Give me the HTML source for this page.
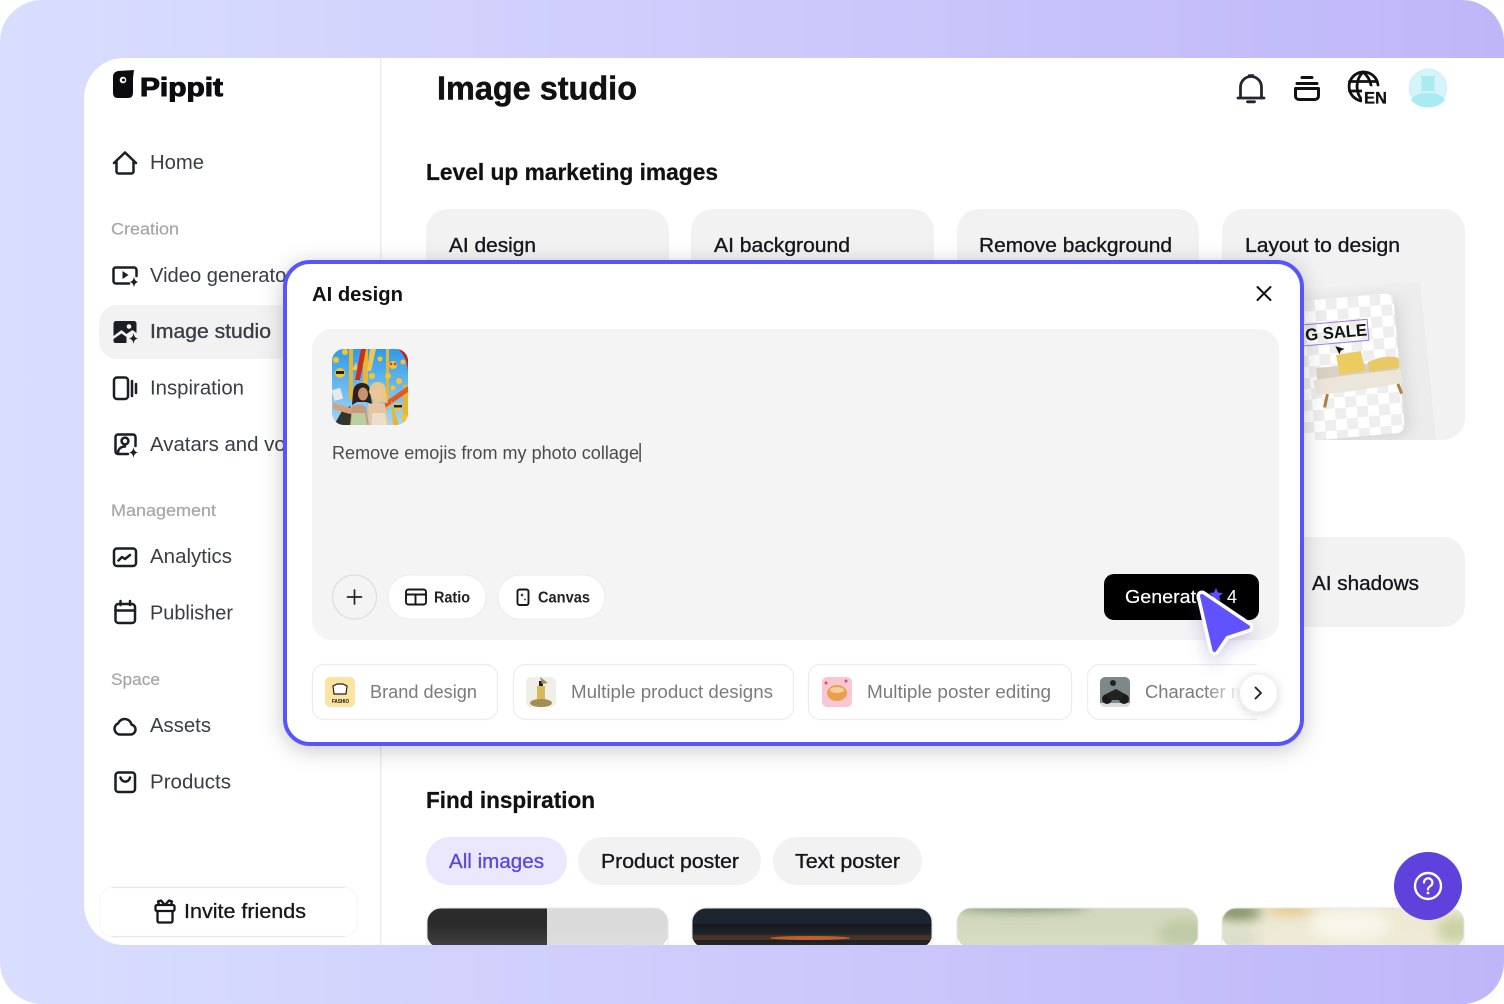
<!DOCTYPE html>
<html lang="en"><head><meta charset="utf-8"><title>Image studio</title>
<style>html,body{margin:0;padding:0;background:#fff;width:1504px;height:1004px;overflow:hidden}svg{display:block}text{font-family:"Liberation Sans",sans-serif}</style></head>
<body>
<svg xmlns="http://www.w3.org/2000/svg" width="1504" height="1004" viewBox="0 0 1504 1004">
<defs>
<linearGradient id="bg" x1="0" x2="1" y1="0" y2="0"><stop offset="0" stop-color="#d9deff"/><stop offset=".5" stop-color="#cdcafb"/><stop offset="1" stop-color="#bfb6f9"/></linearGradient>
<linearGradient id="fade" x1="0" x2="1"><stop offset="0" stop-color="#fff" stop-opacity="0"/><stop offset="1" stop-color="#fff"/></linearGradient>
<linearGradient id="bot" x1="0" x2="0" y1="0" y2="1"><stop offset="0" stop-color="#fff" stop-opacity="0"/><stop offset="1" stop-color="#f6f6f6" stop-opacity=".1"/></linearGradient>
<linearGradient id="sky" x1="0" x2="0" y1="0" y2="1"><stop offset="0" stop-color="#2f9be8"/><stop offset="1" stop-color="#a5d8f5"/></linearGradient>
<linearGradient id="pan" x1="0" x2="1"><stop offset="0" stop-color="#f1f1f1"/><stop offset=".7" stop-color="#efefef"/><stop offset="1" stop-color="#ebebeb"/></linearGradient>
<clipPath id="main"><path d="M124 58H1504V945H124a40 40 0 0 1-40-40V98a40 40 0 0 1 40-40z"/></clipPath>
<clipPath id="th"><rect x="332" y="349" width="76" height="76" rx="12"/></clipPath>
<clipPath id="c1"><rect x="427" y="908" width="241" height="40" rx="14"/></clipPath>
<clipPath id="c2"><rect x="692" y="908" width="240" height="40" rx="14"/></clipPath>
<clipPath id="c3"><rect x="957" y="908" width="241" height="40" rx="14"/></clipPath>
<clipPath id="c4"><rect x="1222" y="908" width="242" height="40" rx="14"/></clipPath>
<clipPath id="l4"><rect x="1222" y="209" width="243" height="231" rx="22"/></clipPath>
<clipPath id="chip4"><rect x="1087" y="664" width="170" height="56"/></clipPath>
<clipPath id="txt4"><rect x="1140" y="670" width="100" height="44"/></clipPath>
<clipPath id="t1"><rect x="325" y="677" width="30" height="30" rx="5"/></clipPath>
<clipPath id="t2"><rect x="526" y="677" width="30" height="30" rx="5"/></clipPath>
<clipPath id="t3"><rect x="822" y="677" width="30" height="30" rx="5"/></clipPath>
<clipPath id="t4"><rect x="1100" y="677" width="30" height="30" rx="5"/></clipPath>
<pattern id="chk" width="22" height="22" patternUnits="userSpaceOnUse"><rect width="22" height="22" fill="#fff"/><rect width="11" height="11" fill="#eeeeee"/><rect x="11" y="11" width="11" height="11" fill="#eeeeee"/></pattern>
<filter id="sh" x="-10%" y="-15%" width="120%" height="130%"><feDropShadow dx="0" dy="4" stdDeviation="11" flood-color="#000" flood-opacity=".22"/></filter>
<filter id="sh2" x="-50%" y="-50%" width="200%" height="200%"><feDropShadow dx="0" dy="6" stdDeviation="8" flood-color="#4030a0" flood-opacity=".25"/></filter>
<filter id="sh3" x="-30%" y="-30%" width="160%" height="160%"><feDropShadow dx="0" dy="2" stdDeviation="5" flood-color="#000" flood-opacity=".15"/></filter>
<filter id="sh4" x="-30%" y="-30%" width="160%" height="160%"><feDropShadow dx="4" dy="4" stdDeviation="8" flood-color="#000" flood-opacity=".12"/></filter>
<filter id="bl" x="-100%" y="-300%" width="300%" height="700%"><feGaussianBlur stdDeviation="6"/></filter>
</defs>

<rect width="1504" height="1004" rx="42" fill="url(#bg)"/>
<g clip-path="url(#main)">
<rect x="84" y="58" width="1420" height="887" fill="#fff"/>
<rect x="380" y="58" width="1.500" height="887" fill="#ececec"/>

<!-- logo -->
<path d="M113 77q0-5 5-6l16-1-1 8v15q0 5-5 5h-10q-5 0-5-5z" fill="#0c0c10"/>
<circle cx="123" cy="80" r="3.300" fill="#fff"/><circle cx="123.500" cy="80" r="1.500" fill="#0c0c10"/>
<text x="140" y="96" font-size="26" font-weight="700" fill="#0c0c10" stroke="#0c0c10" stroke-width="1" textLength="83" lengthAdjust="spacingAndGlyphs">Pippit</text>

<!-- sidebar -->
<rect x="99" y="305" width="210" height="54" rx="18" fill="#f2f2f2"/>
<g font-size="20.500" fill="#3a3d46">
<text x="150" y="169" textLength="54" lengthAdjust="spacingAndGlyphs">Home</text>
<text x="150" y="282" textLength="143" lengthAdjust="spacingAndGlyphs">Video generator</text>
<text x="150" y="338" textLength="121" lengthAdjust="spacingAndGlyphs" stroke="#3a3d46" stroke-width=".35">Image studio</text>
<text x="150" y="394.500" textLength="94" lengthAdjust="spacingAndGlyphs">Inspiration</text>
<text x="150" y="451" textLength="172" lengthAdjust="spacingAndGlyphs">Avatars and voices</text>
<text x="150" y="563" textLength="82" lengthAdjust="spacingAndGlyphs">Analytics</text>
<text x="150" y="619.500" textLength="83" lengthAdjust="spacingAndGlyphs">Publisher</text>
<text x="150" y="732" textLength="61" lengthAdjust="spacingAndGlyphs">Assets</text>
<text x="150" y="788.500" textLength="81" lengthAdjust="spacingAndGlyphs">Products</text>
</g>
<g font-size="16.500" fill="#a6a6a6" stroke="#a6a6a6" stroke-width=".2">
<text x="111" y="234.500" textLength="68" lengthAdjust="spacingAndGlyphs">Creation</text>
<text x="111" y="516" textLength="105" lengthAdjust="spacingAndGlyphs">Management</text>
<text x="111" y="685" textLength="49" lengthAdjust="spacingAndGlyphs">Space</text>
</g>
<!-- sidebar icons -->
<g fill="none" stroke="#1c1e26" stroke-width="2.500" stroke-linecap="round" stroke-linejoin="round">
<path d="M114 163L125 152.500L136 163M116.500 160.500V171.500a2 2 0 0 0 2 2H131.500a2 2 0 0 0 2-2V160.500"/>
<path d="M129 283.500H116a2.500 2.500 0 0 1-2.500-2.500V269.500a2 2 0 0 1 2-2H134a2.500 2.500 0 0 1 2.500 2.500V276"/>
<rect x="114" y="377.500" width="14" height="21.500" rx="3"/>
<path d="M132 381V396M136 384V393"/>
<path d="M128 454H118a2.500 2.500 0 0 1-2.500-2.500V437a2.500 2.500 0 0 1 2.500-2.500H133a2.500 2.500 0 0 1 2.500 2.500V446"/>
<circle cx="125" cy="441" r="3.400"/>
<path d="M118 453c0-4 3-6.500 7-6.500"/>
<rect x="114" y="548.500" width="22" height="17.500" rx="3"/>
<path d="M118.500 560.500l3.500-3.500 3 2 5-4"/>
<rect x="115.500" y="604" width="19.500" height="19" rx="3"/>
<path d="M115.500 610.500H135M120.500 601v4M130 601v4"/>
<path d="M120 734.500h10.500a5 5 0 0 0 1-9.900 7 7 0 0 0-13.300-1.300 5.800 5.800 0 0 0 1.800 11.200z"/>
<rect x="115.500" y="772.500" width="19.500" height="19.500" rx="3"/>
<path d="M120.500 777.500a4.800 4.800 0 0 0 9.500 0"/>
</g>
<g fill="#1c1e26">
<path d="M122.500 271v8l6-4z"/>
<path d="M134 276.500c.6 3.600 1.600 4.800 4.500 5.500-2.900.7-3.900 1.900-4.500 5.500-.6-3.600-1.600-4.800-4.500-5.500 2.900-.7 3.900-1.900 4.500-5.500z"/>
<path d="M116 321h18a2.500 2.500 0 0 1 2.500 2.500V333l-4-3-6 4-5-4-8 6V323.500a2.500 2.500 0 0 1 2.500-2.500zM113.500 339l8-5.500 5 3.500v6h-11a2 2 0 0 1-2-2z" fill-rule="evenodd"/>
<circle cx="129" cy="326.500" r="2.300" fill="#fff"/>
<path d="M133.500 333c.6 3.600 1.600 4.800 4.500 5.500-2.900.7-3.900 1.900-4.500 5.500-.6-3.600-1.600-4.800-4.500-5.500 2.900-.7 3.900-1.900 4.500-5.500z"/>
<path d="M133.500 447c.6 3.600 1.600 4.800 4.500 5.500-2.900.7-3.900 1.900-4.500 5.500-.6-3.600-1.600-4.800-4.500-5.500 2.900-.7 3.900-1.900 4.500-5.500z"/>
</g>

<!-- invite -->
<rect x="100" y="887" width="257" height="50" rx="13" fill="#fff" stroke="#f4f4f4" stroke-width="1"/>
<path d="M112 887.500H345M112 936.500H345" stroke="#e6e6e6" stroke-width="1.200"/>
<g fill="none" stroke="#16161c" stroke-width="2.300" stroke-linejoin="round" stroke-linecap="round">
<rect x="155.500" y="905" width="19" height="6" rx="1.500"/>
<path d="M157.500 911v10a1.500 1.500 0 0 0 1.500 1.500h12a1.500 1.500 0 0 0 1.500-1.500V911M165 905l-4-4.500-3 1 1 3.500M165 905l4-4.500 3 1-1 3.500"/>
</g>
<text x="184" y="918" font-size="20.500" fill="#16161c" stroke="#16161c" stroke-width=".3" textLength="122" lengthAdjust="spacingAndGlyphs">Invite friends</text>

<!-- header -->
<text x="437" y="99.500" font-size="33" font-weight="700" fill="#111" stroke="#111" stroke-width=".5" textLength="200" lengthAdjust="spacingAndGlyphs">Image studio</text>
<g fill="none" stroke="#24262d" stroke-width="2.800" stroke-linecap="round" stroke-linejoin="round">
<path d="M1238 98H1264M1240.500 97V87a10.500 10.500 0 0 1 21 0v10"/>
<path d="M1249 75.500h4" stroke-width="2.400"/>
<path d="M1247.500 101.800h7" stroke-width="2.800"/>
<path d="M1302 77.500h10M1297 83.500h20" stroke="#111" stroke-width="3"/>
<path d="M1295.500 88.500h23v7.500a3.500 3.500 0 0 1-3.500 3.500h-16a3.500 3.500 0 0 1-3.500-3.500z" stroke="#111" stroke-width="3"/>
<g stroke="#111" stroke-width="2.800"><path d="M1378 85a14.500 14.500 0 1 0-14 16"/><path d="M1349.500 81.500h27M1349.500 91h12M1363 72c-8 8-8 21 0 29M1363 72c5 4 7 8 8 13"/></g>
</g>
<rect x="1362" y="90" width="27" height="15" fill="#fff"/>
<text x="1364" y="103.500" font-size="16.500" font-weight="700" fill="#111" stroke="#111" stroke-width=".3" textLength="23" lengthAdjust="spacingAndGlyphs">EN</text>
<circle cx="1428" cy="88" r="19.500" fill="#d5f3f8"/>
<path d="M1421 76h14l-1 4 1 3-1 5 1 3h-14l1-3-1-4 1-4z" fill="#a9ebf3"/>
<path d="M1411 100c3-5 9-7 17-7s14 2 17 7c-4 4.500-10 7.500-17 7.500s-13-3-17-7.500z" fill="#a9ebf3"/>

<!-- marketing -->
<text x="426" y="180" font-size="23.500" font-weight="700" fill="#111" stroke="#111" stroke-width=".25" textLength="292" lengthAdjust="spacingAndGlyphs">Level up marketing images</text>
<g fill="#f2f2f2">
<rect x="426" y="209" width="243" height="231" rx="22"/>
<rect x="691" y="209" width="243" height="231" rx="22"/>
<rect x="957" y="209" width="242" height="231" rx="22"/>
<rect x="1222" y="209" width="243" height="231" rx="22"/>
<rect x="1222" y="537" width="243" height="90" rx="22"/>
</g>
<g font-size="20.500" fill="#16161c" stroke="#16161c" stroke-width=".35">
<text x="449" y="252" textLength="87" lengthAdjust="spacingAndGlyphs">AI design</text>
<text x="714" y="252" textLength="136" lengthAdjust="spacingAndGlyphs">AI background</text>
<text x="979" y="252" textLength="193" lengthAdjust="spacingAndGlyphs">Remove background</text>
<text x="1245" y="252" textLength="155" lengthAdjust="spacingAndGlyphs">Layout to design</text>
<text x="1312" y="590" textLength="107" lengthAdjust="spacingAndGlyphs">AI shadows</text>
</g>
<!-- layout card art -->
<g clip-path="url(#l4)">
<path d="M1290 290L1420 282L1436 440H1300z" fill="url(#pan)"/>
<g transform="rotate(-5 1350 365)">
<rect x="1290" y="297" width="109" height="140" rx="9" fill="url(#chk)" filter="url(#sh4)"/>
<rect x="1288" y="321" width="83" height="21" fill="none" stroke="#9b7ff0" stroke-width="1"/>
<text x="1308" y="337" font-size="17" font-weight="700" fill="#111" textLength="62" lengthAdjust="spacingAndGlyphs">G SALE</text>
<path d="M1337 345l9 3.500-4 1.500-1.500 3.500z" fill="#111"/>
<path d="M1316 365h82v12h-82z" fill="#d9d2c2"/>
<path d="M1312 377q44-3 88-3l2 13q-44 5-88 5z" fill="#ebe5da"/>
<path d="M1337 354l25-2 3 20-26 2z" fill="#eccb60"/>
<path d="M1368 364q16-7 31-2v10l-30 2z" fill="#e9c868"/>
<path d="M1325 392l-4 13M1396 388l3 10" stroke="#b08040" stroke-width="3"/>
</g>
</g>

<!-- find inspiration -->
<text x="426" y="808" font-size="23.500" font-weight="700" fill="#111" stroke="#111" stroke-width=".25" textLength="169" lengthAdjust="spacingAndGlyphs">Find inspiration</text>
<rect x="426" y="837" width="141" height="48" rx="24" fill="#ebe7fd"/>
<rect x="578" y="837" width="183" height="48" rx="24" fill="#f2f2f2"/>
<rect x="773" y="837" width="149" height="48" rx="24" fill="#f2f2f2"/>
<text x="449" y="868" font-size="20.500" fill="#5f46e0" stroke="#5f46e0" stroke-width=".35" textLength="95" lengthAdjust="spacingAndGlyphs">All images</text>
<text x="601" y="868" font-size="20.500" fill="#16161c" stroke="#16161c" stroke-width=".35" textLength="138" lengthAdjust="spacingAndGlyphs">Product poster</text>
<text x="795" y="868" font-size="20.500" fill="#16161c" stroke="#16161c" stroke-width=".35" textLength="105" lengthAdjust="spacingAndGlyphs">Text poster</text>

<g clip-path="url(#c1)"><rect x="427" y="908" width="120" height="40" fill="#2b2b2b"/><rect x="547" y="908" width="121" height="40" fill="#dadada"/></g>
<g clip-path="url(#c2)"><rect x="692" y="908" width="240" height="40" fill="#141a20"/><rect x="692" y="908" width="240" height="16" fill="#1c252d"/><rect x="692" y="935" width="240" height="5" fill="#3f2518"/><ellipse cx="810" cy="938" rx="40" ry="2" fill="#b8561f"/><rect x="692" y="940" width="240" height="8" fill="#0d0f11"/></g>
<g clip-path="url(#c3)"><rect x="957" y="908" width="241" height="40" fill="#d3d9bd"/><ellipse cx="1020" cy="904" rx="70" ry="6" fill="#6f8660" filter="url(#bl)"/><ellipse cx="1185" cy="935" rx="28" ry="14" fill="#bcc8a2" filter="url(#bl)"/></g>
<g clip-path="url(#c4)"><rect x="1222" y="908" width="242" height="40" fill="#ede9d4"/><ellipse cx="1238" cy="912" rx="24" ry="9" fill="#7f9364" filter="url(#bl)"/><ellipse cx="1290" cy="908" rx="24" ry="6" fill="#e6c37a" filter="url(#bl)"/><ellipse cx="1350" cy="925" rx="40" ry="16" fill="#f8f6ea" filter="url(#bl)"/><ellipse cx="1455" cy="930" rx="18" ry="14" fill="#c9d0a0" filter="url(#bl)"/><ellipse cx="1235" cy="940" rx="25" ry="12" fill="#d6dcc8" filter="url(#bl)"/></g>
<g fill="none" stroke="#e6e6e6" stroke-width="1"><rect x="427" y="908" width="241" height="60" rx="14"/><rect x="692" y="908" width="240" height="60" rx="14"/><rect x="957" y="908" width="241" height="60" rx="14"/><rect x="1222" y="908" width="242" height="60" rx="14"/></g>
<rect x="84" y="925" width="1420" height="20" fill="url(#bot)"/>
</g>

<!-- help -->
<circle cx="1428" cy="886" r="34" fill="#5f41dc"/>
<circle cx="1428" cy="886" r="13" fill="none" stroke="#fff" stroke-width="2.400"/>
<path d="M1424 882.500a4.200 4.200 0 1 1 6.500 3.500c-1.600 1-2.500 1.800-2.500 3.500" fill="none" stroke="#fff" stroke-width="2.200" stroke-linecap="round"/>
<circle cx="1428" cy="893" r="1.400" fill="#fff"/>

<!-- modal -->
<rect x="285" y="262" width="1017" height="482" rx="25" fill="#fff" stroke="#5555fb" stroke-width="4" filter="url(#sh)"/>
<text x="312" y="301" font-size="20.500" font-weight="700" fill="#111" textLength="91" lengthAdjust="spacingAndGlyphs">AI design</text>
<path d="M1257.500 287l13 13M1270.500 287l-13 13" stroke="#111" stroke-width="2" stroke-linecap="round"/>
<rect x="312" y="329" width="967" height="311" rx="20" fill="#f4f4f4"/>

<!-- thumbnail -->
<g clip-path="url(#th)">
<rect x="332" y="349" width="76" height="76" fill="url(#sky)"/>
<path d="M398 349q10 8 10 26v-26z" fill="#c81e1e"/>
<path d="M349 349h4v50h-4zM363 349h5v50h-5zM386 349h3v60h-3zM403 385h5v40h-5z" fill="#eab531"/>
<path d="M370 349h6l-5 22h-4zM352 370l4-8 2 8z" fill="#eec75a"/>
<path d="M355 380l6-31h5l-6 31z" fill="#c72f20"/>
<path d="M385 402l23-16v6l-23 16z" fill="#e4581f"/>
<path d="M372 395l10-6v8z" fill="#eab531"/>
<path d="M334 425l8-14 8-5 6 19z" fill="#33342c"/>
<path d="M391 400l8 25h-6z" fill="#eab531"/>
<!-- girls -->
<path d="M333 403l18 5 3-2 2 7-6 1-17-5z" fill="#d6a07a"/>
<path d="M352 406q7-3 14 1l3 18h-19z" fill="#c89878"/>
<path d="M352 413h13l2 12h-16z" fill="#b8d0a0"/>
<path d="M368 404q9-4 17 1l4 20h-20z" fill="#e8c4a0"/>
<path d="M372 413h13l2 12h-15z" fill="#eadfcb"/>
<path d="M353 392q1-9 9-9 8 0 8 9l2 12-6-2h-9l-5 3z" fill="#2e201a"/>
<ellipse cx="363" cy="394" rx="5" ry="6.500" fill="#c99272"/>
<path d="M369 392q1-10 9-10 8 0 8 10l2 11-6-1h-8z" fill="#e6c98a"/>
<ellipse cx="377" cy="393" rx="5" ry="6.500" fill="#edc49c"/>
<rect x="333" y="389" width="9" height="11" fill="#e8e8e8" transform="rotate(-15 337 395)"/>
<g fill="#f6c52d"><circle cx="345" cy="352" r="3"/><circle cx="336" cy="360" r="3"/><circle cx="340" cy="373" r="5"/><circle cx="380" cy="359" r="2.500"/><circle cx="393" cy="365" r="4"/><circle cx="403" cy="362" r="2.500"/><circle cx="388" cy="376" r="3"/><circle cx="372" cy="376" r="3"/><circle cx="399" cy="381" r="3"/><circle cx="393" cy="388" r="2.500"/><circle cx="398" cy="407" r="4"/><circle cx="404" cy="417" r="3"/></g>
<rect x="336" y="371" width="8" height="3" fill="#222"/><rect x="394" y="405" width="8" height="2.500" fill="#222"/><circle cx="391" cy="364" r="1.300" fill="#d33"/><circle cx="395" cy="364" r="1.300" fill="#d33"/>
</g>
<text x="332" y="459" font-size="18.500" fill="#4b4b4b" textLength="307" lengthAdjust="spacingAndGlyphs">Remove emojis from my photo collage</text>
<rect x="639.500" y="443" width="1.200" height="19" fill="#222"/>

<!-- toolbar -->
<circle cx="354.500" cy="597" r="22" fill="#f4f4f4" stroke="#dedede" stroke-width="1.200"/>
<path d="M354.500 590v14M347.500 597h14" stroke="#222" stroke-width="1.700" stroke-linecap="round"/>
<rect x="388" y="575" width="98" height="44" rx="22" fill="#fff" stroke="#ececec"/>
<rect x="498" y="575" width="107" height="44" rx="22" fill="#fff" stroke="#ececec"/>
<g fill="none" stroke="#16161c" stroke-width="1.900" stroke-linejoin="round"><rect x="406" y="589.500" width="20" height="15" rx="2.500"/><path d="M406 594.500h20M415.500 594.500v10"/><rect x="517.500" y="589.500" width="11" height="15.500" rx="2"/></g>
<path d="M522 592.500c.3 1.700.7 2.200 2 2.500-1.300.3-1.700.8-2 2.500-.3-1.700-.7-2.200-2-2.500 1.300-.3 1.700-.8 2-2.500zM525 598c.2 1 .5 1.300 1.300 1.500-.8.200-1.100.5-1.300 1.500-.2-1-.5-1.300-1.300-1.500.8-.2 1.100-.5 1.300-1.500z" fill="#16161c"/>
<text x="434" y="602.500" font-size="15.500" font-weight="700" fill="#222" textLength="36" lengthAdjust="spacingAndGlyphs">Ratio</text>
<text x="538" y="602.500" font-size="15.500" font-weight="700" fill="#222" textLength="52" lengthAdjust="spacingAndGlyphs">Canvas</text>

<!-- generate -->
<rect x="1104" y="574" width="155" height="46" rx="10" fill="#000"/>
<text x="1125" y="603" font-size="18.500" fill="#fff" stroke="#fff" stroke-width=".2" textLength="82" lengthAdjust="spacingAndGlyphs">Generate</text>
<path d="M1216 588l2 4.500 5 .5-3.800 3.200 1.200 5-4.400-2.700-4.400 2.700 1.200-5-3.800-3.200 5-.5z" fill="#6050ff"/>
<text x="1227" y="603" font-size="18.500" fill="#fff" textLength="10" lengthAdjust="spacingAndGlyphs">4</text>

<!-- chips -->
<g fill="#fff" stroke="#ececec" stroke-width="1.200">
<rect x="312.500" y="664.500" width="185" height="55" rx="12"/>
<rect x="513.500" y="664.500" width="280" height="55" rx="12"/>
<rect x="808.500" y="664.500" width="263" height="55" rx="12"/>
<rect x="1087.500" y="664.500" width="200" height="55" rx="12" clip-path="url(#chip4)"/>
</g>
<g font-size="18.500" fill="#7b7b7b">
<text x="370" y="698" textLength="107" lengthAdjust="spacingAndGlyphs">Brand design</text>
<text x="571" y="698" textLength="202" lengthAdjust="spacingAndGlyphs">Multiple product designs</text>
<text x="867" y="698" textLength="184" lengthAdjust="spacingAndGlyphs">Multiple poster editing</text>
<text x="1145" y="698" textLength="101" lengthAdjust="spacingAndGlyphs" clip-path="url(#txt4)">Character m</text>
</g>
<rect x="1205" y="666" width="36" height="52" fill="url(#fade)"/>
<g clip-path="url(#t1)"><rect x="325" y="677" width="30" height="30" fill="#fbe3a0"/><path d="M333 686l4-2h6l4 2-1 8h-12z" fill="#fff" stroke="#222" stroke-width="1.200"/><text x="332" y="703" font-size="5.500" font-weight="700" fill="#111" textLength="17" lengthAdjust="spacingAndGlyphs">FASHIO</text></g>
<g clip-path="url(#t2)"><rect x="526" y="677" width="30" height="30" fill="#efeee8"/><rect x="537" y="686" width="8" height="17" fill="#d8b95c"/><rect x="539" y="681" width="4" height="5" fill="#222"/><ellipse cx="541" cy="703" rx="11" ry="4" fill="#a38f55"/><path d="M540 677l8 6-6 1z" fill="#a08c58"/></g>
<g clip-path="url(#t3)"><rect x="822" y="677" width="30" height="30" fill="#f7c8d4"/><ellipse cx="837" cy="693" rx="10" ry="8" fill="#e8a04c"/><ellipse cx="837" cy="690" rx="7" ry="3" fill="#f6cfa0"/><circle cx="826" cy="683" r="1.500" fill="#e0457c"/><circle cx="846" cy="681" r="1.500" fill="#e0457c"/></g>
<g clip-path="url(#t4)"><rect x="1100" y="677" width="30" height="30" fill="#7c8988"/><rect x="1100" y="703" width="30" height="4" fill="#d8dcdc"/><circle cx="1107" cy="699" r="5" fill="#1b1b1b"/><circle cx="1124" cy="699" r="5" fill="#1b1b1b"/><path d="M1106 694l10-5 9 5-4 6h-10z" fill="#222"/><circle cx="1113" cy="683" r="3" fill="#222"/></g>
<circle cx="1258.500" cy="693" r="19" fill="#fff" stroke="#ededed" filter="url(#sh3)"/>
<path d="M1255.500 687.500l5.500 5.500-5.500 5.500" fill="none" stroke="#222" stroke-width="1.900" stroke-linecap="round" stroke-linejoin="round"/>

<!-- cursor -->
<path d="M1202 596L1248 627L1225 634.500L1214.500 650Z" fill="#fff" stroke="#fff" stroke-width="11" stroke-linejoin="round" filter="url(#sh2)"/>
<path d="M1202 596L1248 627L1225 634.500L1214.500 650Z" fill="#6152ff" stroke="#6152ff" stroke-width="4" stroke-linejoin="round"/>
</svg>
</body></html>
